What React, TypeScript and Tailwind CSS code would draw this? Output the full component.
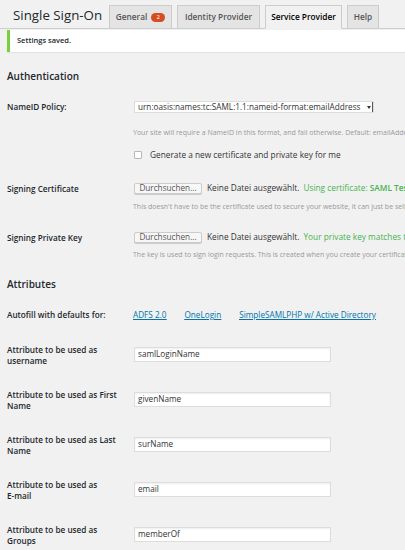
import React from 'react';

const font = { fontFamily: '"Open Sans", "Noto Sans", sans-serif' };

const tabs = [
  { label: 'General', badge: '2', w: 'w-[63px]' },
  { label: 'Identity Provider', w: 'w-[83px]' },
  { label: 'Service Provider', w: 'w-[77px]', active: true },
  { label: 'Help', w: 'w-[32px]' },
];

const attributes = [
  { line1: 'Attribute to be used as', line2: 'username', value: 'samlLoginName' },
  { line1: 'Attribute to be used as First', line2: 'Name', value: 'givenName' },
  { line1: 'Attribute to be used as Last', line2: 'Name', value: 'surName' },
  { line1: 'Attribute to be used as', line2: 'E-mail', value: 'email' },
  { line1: 'Attribute to be used as', line2: 'Groups', value: 'memberOf' },
];

const FileButton: React.FC = () => (
  <div className="h-[11px] w-[68px] shrink-0 flex items-center justify-center bg-[#f7f7f7] border border-[#ccc] rounded-[2px] shadow-[0_1px_0_#ccc] text-[8.2px] text-[#555]">
    Durchsuchen...
  </div>
);

export default function App() {
  return (
    <div style={font} className="w-[405px] h-[550px] overflow-hidden bg-[#f1f1f1] text-[#23282d]">
      {/* title + tabs */}
      <div className="flex h-[29px] border-b border-[#ccc] pl-[13px]">
        <h2 className="pt-[4px] leading-[22px] text-[13.3px] font-normal w-[96px] whitespace-nowrap">Single Sign-On</h2>
        <div className="flex gap-[5px] items-end">
          {tabs.map((t) => (
            <div
              key={t.label}
              className={`${t.w} h-[24px] -mb-px flex items-center justify-center gap-[4px] border border-[#ccc] text-[8.3px] font-semibold whitespace-nowrap ${
                t.active ? 'bg-[#f1f1f1] border-b-[#f1f1f1] text-black' : 'bg-[#e4e4e4] text-[#555]'
              }`}
            >
              {t.label}
              {t.badge && (
                <span className="h-[9px] min-w-[14px] px-[3px] rounded-full bg-[#d54e21] text-white text-[6px] font-normal flex items-center justify-center">
                  {t.badge}
                </span>
              )}
            </div>
          ))}
        </div>
      </div>

      {/* notice */}
      <div className="mt-[1px] ml-[7px] h-[22px] bg-white border-l-[3px] border-[#7ad03a] shadow-[0_1px_1px_rgba(0,0,0,0.06)] flex items-center pl-[7px] text-[7.5px] font-semibold">
        Settings saved.
      </div>

      <div className="pl-[7px]">
        <h3 className="mt-[18px] leading-[12px] text-[10px] font-semibold">Authentication</h3>

        {/* NameID */}
        <div className="mt-[19px] flex">
          <div className="w-[127px] shrink-0 text-[8.2px] font-semibold leading-[12px]">NameID Policy:</div>
          <div className="min-w-0">
            <div className="h-[12px] w-[240px] bg-white border border-[#ddd] flex items-center justify-between pl-[3px] text-[8.2px] text-[#333] whitespace-nowrap">
              <span>urn:oasis:names:tc:SAML:1.1:nameid-format:emailAddress</span>
              <span className="h-full w-[7px] flex items-center justify-center border-r border-[#555]">
                <svg width="4" height="3" viewBox="0 0 4 3"><path d="M0 0h4L2 3z" fill="#333" /></svg>
              </span>
            </div>
            <div className="mt-[15px] -ml-[1px] leading-[9px] text-[7px] text-[#999] whitespace-nowrap">
              Your site will require a NameID in this format, and fail otherwise. Default: emailAddress
            </div>
          </div>
        </div>

        {/* checkbox */}
        <div className="mt-[13px] h-[10px] flex items-center pl-[127px]">
          <span className="w-[8px] h-[8px] bg-white border border-[#b4b9be] rounded-[1px] shrink-0" />
          <span className="ml-[8px] text-[8.3px] text-[#333] whitespace-nowrap">Generate a new certificate and private key for me</span>
        </div>

        {/* signing certificate */}
        <div className="mt-[23px] flex">
          <div className="w-[127px] shrink-0 text-[8.2px] font-semibold leading-[11px]">Signing Certificate</div>
          <div className="min-w-0">
            <div className="flex items-center h-[11px] whitespace-nowrap text-[8.3px]">
              <FileButton />
              <span className="ml-[5px] text-[#333]">Keine Datei ausgewählt.</span>
              <span className="ml-[4px] text-[#46b450]">
                Using certificate: <span className="font-semibold">SAML Test Certificate</span>
              </span>
            </div>
            <div className="mt-[8px] -ml-[1px] leading-[9px] text-[7px] text-[#999] whitespace-nowrap">
              This doesn't have to be the certificate used to secure your website, it can just be self-signed.
            </div>
          </div>
        </div>

        {/* signing key */}
        <div className="mt-[21px] flex">
          <div className="w-[127px] shrink-0 text-[8.2px] font-semibold leading-[11px]">Signing Private Key</div>
          <div className="min-w-0">
            <div className="flex items-center h-[11px] whitespace-nowrap text-[8.3px]">
              <FileButton />
              <span className="ml-[5px] text-[#333]">Keine Datei ausgewählt.</span>
              <span className="ml-[4px] text-[#46b450]">Your private key matches the certificate.</span>
            </div>
            <div className="mt-[7px] -ml-[1px] leading-[9px] text-[7px] text-[#999] whitespace-nowrap">
              The key is used to sign login requests. This is created when you create your certificate.
            </div>
          </div>
        </div>

        <h3 className="mt-[19px] leading-[12px] text-[10px] font-semibold">Attributes</h3>

        {/* autofill */}
        <div className="mt-[19px] flex leading-[11px] text-[8.2px]">
          <div className="w-[126px] shrink-0 font-semibold">Autofill with defaults for:</div>
          <div className="flex gap-[18px] text-[#0073aa] underline whitespace-nowrap">
            <a href="#">ADFS 2.0</a>
            <a href="#">OneLogin</a>
            <a href="#">SimpleSAMLPHP w/ Active Directory</a>
          </div>
        </div>

        {/* attributes */}
        <div className="mt-[24px] flex flex-col gap-[23px]">
          {attributes.map((a) => (
            <div key={a.value} className="flex">
              <div className="w-[127px] shrink-0 text-[8.2px] font-semibold leading-[11px]">
                {a.line1}
                <br />
                {a.line2}
              </div>
              <div className="mt-[3px] h-[15px] w-[197px] bg-white border border-[#ddd] shadow-[inset_0_1px_2px_rgba(0,0,0,0.07)] flex items-center pl-[3px] text-[8.2px] text-[#333]">
                {a.value}
              </div>
            </div>
          ))}
        </div>
      </div>
    </div>
  );
}
